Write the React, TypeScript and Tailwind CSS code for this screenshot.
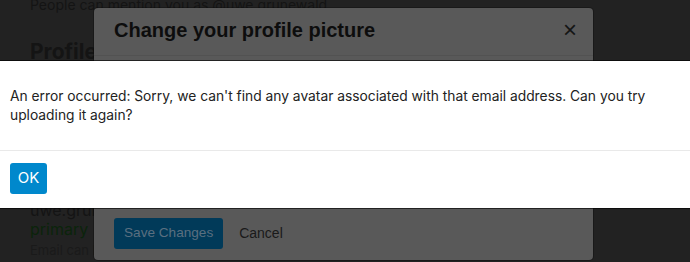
export default function App() {
  return (
    <div className="relative h-[262px] w-[690px] overflow-hidden bg-[#222222]" style={{ fontFamily: "Inter, 'Liberation Sans', sans-serif" }}>
      {/* dimmed page behind */}
      <div className="flex flex-col pl-[30px] text-[#141414]">
        <div className="mt-[-4px] text-[14px] leading-[18px]">People can mention you as @uwe.grunewald</div>
        <div className="mt-[24px] text-[21px] font-bold leading-[28px]">Profile Picture</div>
        <div className="mt-[134px] text-[16px] leading-[20px]">uwe.grunewald@example.com</div>
        <div className="text-[16px] leading-[19px] text-[#0b240b]">primary</div>
        <div className="mt-[2px] text-[13px] leading-[18px] text-[#1a1a1a]">Email can be changed</div>
      </div>

      {/* dimmed modal */}
      <div
        className="absolute left-[94px] top-[8px] h-[252px] w-[499px] rounded-[4px] bg-[#595959] shadow-[0_0_0_1px_rgba(0,0,0,0.25)]"
        style={{ fontFamily: "'Liberation Sans', Arial, sans-serif" }}
      >
        <div className="flex items-center justify-between border-b border-[#525252] pl-[20px] pr-[16px] pt-[9px] pb-[12px]">
          <div className="text-[20px] font-bold leading-[26px] text-[#0d0d0d]">Change your profile picture</div>
          <div className="text-[24px] font-light leading-[22px] text-[#151515]">×</div>
        </div>
        <div className="h-[162px]" />
        <div className="flex items-center gap-[16px] pl-[20px]">
          <div className="flex h-[31px] items-center rounded-[3px] bg-[#013a59] px-[10px] text-[13.6px] text-[#5a6f80]">Save Changes</div>
          <div className="text-[14px] text-[#1a1a1a]">Cancel</div>
        </div>
      </div>

      {/* bootbox */}
      <div className="absolute left-0 right-0 top-[61px] h-[147px] bg-white shadow-[0_-1px_0_rgba(0,0,0,0.6),0_1px_0_rgba(0,0,0,0.6)]">
        <div className="h-[90px] border-b border-[#e9e9e9] px-[10px] pt-[26px] text-[13.8px] leading-[19px] text-[#222]">
          An error occurred: Sorry, we can't find any avatar associated with that email address. Can you try uploading it again?
        </div>
        <div className="px-[10px] pt-[12px]">
          <div className="flex h-[31px] w-[37px] items-center justify-center rounded-[3px] bg-[#0088cc] text-[15px] text-white">OK</div>
        </div>
      </div>
    </div>
  );
}
